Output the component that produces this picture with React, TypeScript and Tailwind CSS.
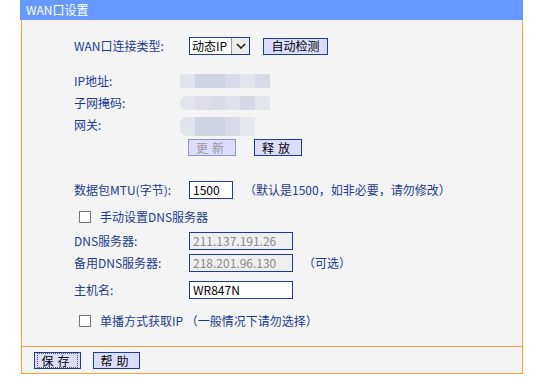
import React from "react";

const font = { fontFamily: '"Noto Sans CJK SC", "Liberation Sans", sans-serif' };

const Label = ({ children }: { children: React.ReactNode }) => (
  <div className="w-[115px] shrink-0 text-[12px] leading-none text-[#1a3b95]">{children}</div>
);

const Btn = ({ children, disabled, focus, w = "w-[48px]" }: { children: React.ReactNode; disabled?: boolean; focus?: boolean; w?: string }) => (
  <div
    className={`${w} h-[17px] flex items-center justify-center border ${
      disabled ? "border-[#8c97d2] text-[#9a9a9a]" : "border-[#1c3aa0] text-black"
    } bg-[#dcdcfc] text-[12px] leading-none tracking-[4px]`}
  >
    {focus ? (
      <div className="w-full h-full m-[2px] flex items-center justify-center border border-dotted border-[#555]">{children}</div>
    ) : (
      children
    )}
  </div>
);

const Mosaic = ({ colors, rounded, h = "h-[14px]" }: { colors: string[]; rounded?: boolean; h?: string }) => (
  <div className={`flex ${h} ${rounded ? "rounded-l-[7px] overflow-hidden" : ""}`}>
    {colors.map((c, i) => (
      <div key={i} className="w-[15px] h-full" style={{ backgroundColor: c }} />
    ))}
  </div>
);

const Checkbox = () => <div className="w-[12px] h-[12px] border border-[#777] bg-white shrink-0" />;

export default function App() {
  return (
    <div className="w-[540px] h-[384px] bg-white pl-[20px]" style={font}>
      <div className="w-[503px]">
        {/* header */}
        <div className="h-[20px] bg-[#6699ff] text-white text-[12px] leading-none flex items-center pl-[6px]">
          WAN口设置
        </div>

        <div className="border-x border-b border-[#f7a045] bg-[#f4f4f4] ml-[1px] w-[502px]">
          <div className="pl-[52px] pt-[17px] pb-[16px]">
            <div className="flex items-center h-[18px]">
              <Label>WAN口连接类型:</Label>
              <div className="w-[61px] h-[18px] border border-[#1c3aa0] bg-white flex items-center">
                <span className="flex-1 text-[12px] leading-none pl-[2px] text-black">动态IP</span>
                <div className="w-[18px] h-full bg-[#ececec] border-l border-[#999] flex items-center justify-center">
                  <svg width="10" height="6" viewBox="0 0 10 6">
                    <path d="M1 1 L5 5 L9 1" stroke="#222" strokeWidth="1.6" fill="none" />
                  </svg>
                </div>
              </div>
              <div className="ml-[13px]">
                <Btn w="w-[65px]">
                  <span className="tracking-normal">自动检测</span>
                </Btn>
              </div>
            </div>

            <div className="flex items-center h-[22px] mt-[15px]">
              <Label>IP地址:</Label>
              <div className="-ml-[9px]">
                <Mosaic colors={["#e2e4ec", "#cfd4e2", "#cfd4e2", "#d9dce8", "#e3e5ee", "#d8dbe7"]} />
              </div>
            </div>
            <div className="flex items-center h-[22px]">
              <Label>子网掩码:</Label>
              <div className="-ml-[9px]">
                <Mosaic rounded colors={["#e3e5ed", "#dcdfe9", "#d8dce7", "#dfe2eb", "#d5d9e5", "#e4e6ee"]} />
              </div>
            </div>
            <div className="flex items-start h-[22px] pt-[5px]">
              <Label>网关:</Label>
              <div className="-ml-[9px] mt-[-2px]">
                <Mosaic rounded h="h-[19px]" colors={["#e2e4ec", "#cfd4e2", "#cfd4e2", "#d9dce8", "#e6e8ef"]} />
              </div>
            </div>

            <div className="flex h-[17px] mt-[3px] pl-[114px] gap-[18px]">
              <Btn disabled>更新</Btn>
              <Btn>释放</Btn>
            </div>

            <div className="flex items-center h-[18px] mt-[25px]">
              <Label>数据包MTU(字节):</Label>
              <div className="w-[44px] h-[18px] border border-[#1c3aa0] bg-white text-[12px] leading-none flex items-center pl-[3px]">1500</div>
              <span className="ml-[11px] text-[12px] leading-none text-[#1a3b95]">（默认是1500，如非必要，请勿修改）</span>
            </div>

            <div className="flex items-center h-[18px] mt-[9px] pl-[5px]">
              <Checkbox />
              <span className="ml-[9px] text-[12px] leading-none text-[#1a3b95]">手动设置DNS服务器</span>
            </div>

            <div className="flex items-center h-[18px] mt-[6px]">
              <Label>DNS服务器:</Label>
              <div className="w-[104px] h-[18px] border border-[#1c3aa0] bg-[#efefef] text-[12px] leading-none text-[#8a8a8a] flex items-center pl-[3px]">211.137.191.26</div>
            </div>
            <div className="flex items-center h-[18px] mt-[4px]">
              <Label>备用DNS服务器:</Label>
              <div className="w-[104px] h-[18px] border border-[#1c3aa0] bg-[#efefef] text-[12px] leading-none text-[#8a8a8a] flex items-center pl-[3px]">218.201.96.130</div>
              <span className="ml-[10px] text-[12px] leading-none text-[#1a3b95]">（可选）</span>
            </div>
            <div className="flex items-center h-[18px] mt-[9px]">
              <Label>主机名:</Label>
              <div className="w-[104px] h-[18px] border border-[#1c3aa0] bg-white text-[12px] leading-none text-black flex items-center pl-[3px]">WR847N</div>
            </div>

            <div className="flex items-center h-[18px] mt-[13px] pl-[5px]">
              <Checkbox />
              <span className="ml-[9px] text-[12px] leading-none text-[#1a3b95]">单播方式获取IP （一般情况下请勿选择）</span>
            </div>
          </div>

          {/* footer */}
          <div className="border-t border-[#f7a045] pt-[5px] pb-[4px] pl-[12px] flex gap-[12px]">
            <Btn focus w="w-[47px]">保存</Btn>
            <Btn w="w-[47px]">帮助</Btn>
          </div>
        </div>
      </div>
    </div>
  );
}
